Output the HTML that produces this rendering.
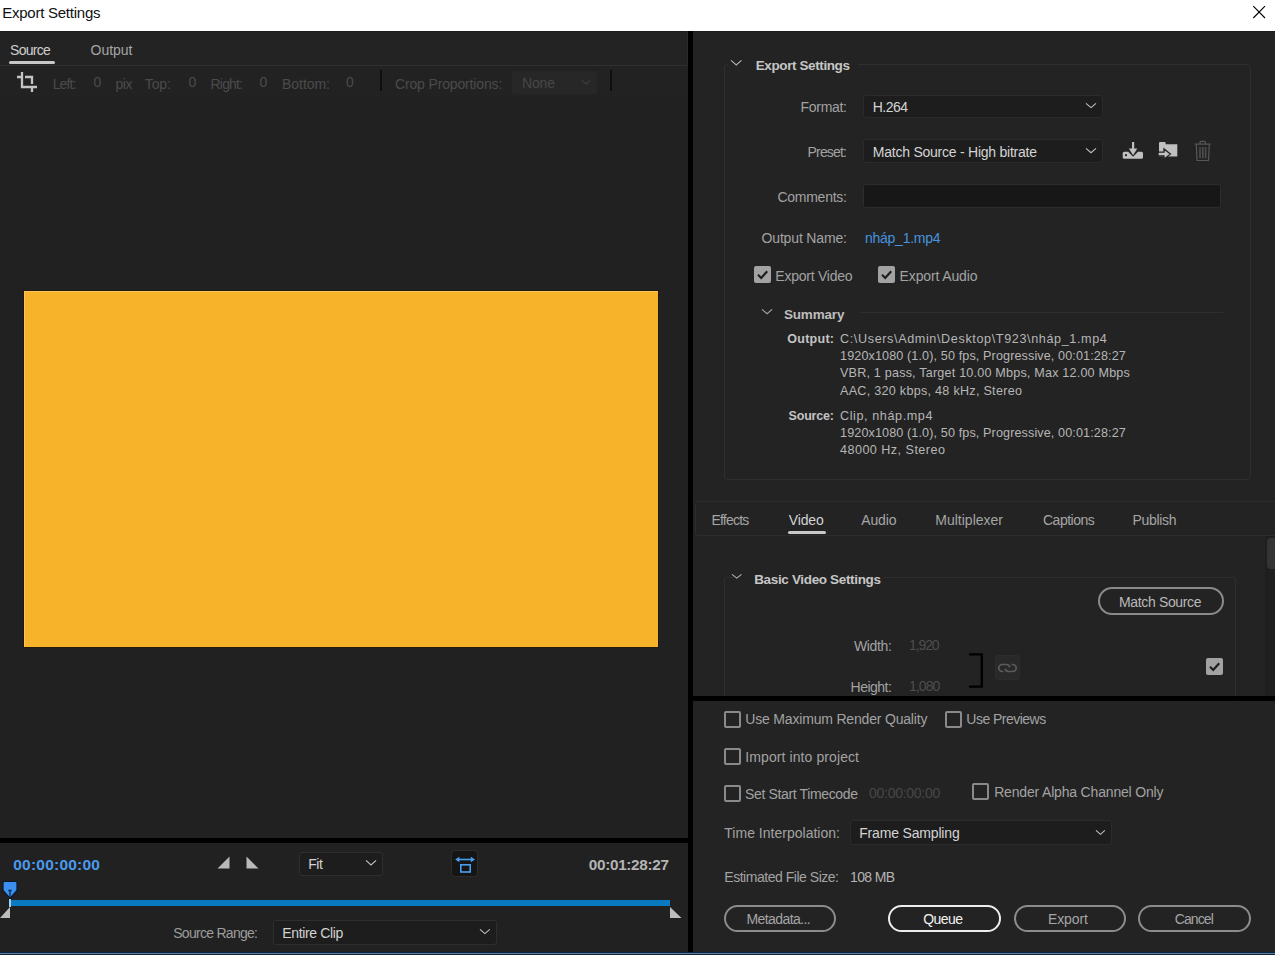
<!DOCTYPE html>
<html><head><meta charset="utf-8"><title>Export Settings</title>
<style>
html,body{margin:0;padding:0;background:#232323;}
body{width:1275px;height:955px;position:relative;overflow:hidden;background:#232323;font-family:"Liberation Sans",sans-serif;}
body>div,body>span,body>svg{position:absolute;}
.t{white-space:nowrap;}
</style></head><body>
<div style="left:0px;top:0px;width:1275px;height:31px;background:#ffffff;"></div>
<div style="left:0px;top:31px;width:1275px;height:1px;background:#1c1c1c;"></div>
<span class="t" style="left:2.20px;top:5.40px;font-size:15px;line-height:15px;color:#111111;letter-spacing:-0.244px;">Export Settings</span>
<svg style="position:absolute;left:1250px;top:3px" width="18" height="18"><path d="M3.3 3.2 L15 15 M15 3.2 L3.3 15" stroke="#000" stroke-width="1.1" fill="none"/></svg>
<div style="left:0px;top:66px;width:688px;height:886px;background:#212121;"></div>
<div style="left:0px;top:66px;width:687px;height:32px;background:#222222;"></div>
<span class="t" style="left:10.00px;top:43.15px;font-size:14.0px;line-height:14.0px;color:#d0d0d0;letter-spacing:-0.712px;">Source</span>
<span class="t" style="left:90.60px;top:43.15px;font-size:14.0px;line-height:14.0px;color:#a5a5a5;letter-spacing:-0.045px;">Output</span>
<div style="left:9px;top:61px;width:46px;height:3px;background:#c8c8c8;border-radius:2px;"></div>
<div style="left:0px;top:65px;width:687px;height:1px;background:#303030;"></div>
<div style="left:687px;top:31px;width:1px;height:35px;background:#2a2a2a;"></div>
<svg style="position:absolute;left:16px;top:71px" width="23" height="23"><path d="M1 6 H7 M6 1 V16 H21 M9 6 H16 V13 M16 15 V21" stroke="#c4c4c4" stroke-width="2.3" fill="none"/></svg>
<span class="t" style="left:52.70px;top:77.15px;font-size:14.0px;line-height:14.0px;color:#4b4b4b;letter-spacing:-0.860px;">Left:</span>
<span class="t" style="left:93.50px;top:75.15px;font-size:14px;line-height:14px;color:#4b4b4b;letter-spacing:0.000px;">0</span>
<span class="t" style="left:115.40px;top:77.15px;font-size:14px;line-height:14px;color:#4b4b4b;letter-spacing:-0.398px;">pix</span>
<span class="t" style="left:144.70px;top:77.15px;font-size:14.0px;line-height:14.0px;color:#4b4b4b;letter-spacing:-0.054px;">Top:</span>
<span class="t" style="left:188.60px;top:75.15px;font-size:14px;line-height:14px;color:#4b4b4b;letter-spacing:0.000px;">0</span>
<span class="t" style="left:210.60px;top:77.15px;font-size:14.0px;line-height:14.0px;color:#4b4b4b;letter-spacing:-0.834px;">Right:</span>
<span class="t" style="left:259.50px;top:75.15px;font-size:14px;line-height:14px;color:#4b4b4b;letter-spacing:0.000px;">0</span>
<span class="t" style="left:282.00px;top:77.15px;font-size:14.0px;line-height:14.0px;color:#4b4b4b;letter-spacing:-0.040px;">Bottom:</span>
<span class="t" style="left:346.00px;top:75.15px;font-size:14px;line-height:14px;color:#4b4b4b;letter-spacing:0.000px;">0</span>
<div style="left:380px;top:70px;width:2px;height:21px;background:#0e0e0e;"></div>
<span class="t" style="left:395.00px;top:77.15px;font-size:14.0px;line-height:14.0px;color:#4b4b4b;letter-spacing:-0.151px;">Crop Proportions:</span>
<div style="left:512px;top:71px;width:85px;height:23px;background:#272727;border-radius:3px;"></div>
<span class="t" style="left:522.00px;top:76.15px;font-size:14px;line-height:14px;color:#474747;letter-spacing:-0.156px;">None</span>
<svg style="position:absolute;left:579px;top:77px" width="14" height="10.5"><path d="M3 3.4 L7.0 7.1 L11 3.4" stroke="#424242" stroke-width="1.05" fill="none"/></svg>
<div style="left:610px;top:70px;width:2px;height:21px;background:#0e0e0e;"></div>
<div style="left:23px;top:290px;width:636px;height:358px;background:#221a0a;"></div>
<div style="left:24px;top:291px;width:634px;height:356px;background:#f7b42a;box-shadow:inset 1px 1px 0 #f8c75c;"></div>
<div style="left:0px;top:838px;width:688px;height:5px;background:#000;"></div>
<span class="t" style="left:13.20px;top:856.58px;font-size:15.5px;line-height:15.5px;color:#4a9aee;font-weight:bold;letter-spacing:0.235px;">00:00:00:00</span>
<svg style="position:absolute;left:216px;top:856px" width="45" height="14"><path d="M1.5 12.5 L13.5 12.5 L13.5 0.5 Z M30.5 0.5 L30.5 12.5 L42.5 12.5 Z" fill="#b9b9b9"/></svg>
<div style="left:299px;top:852px;width:84px;height:24px;background:#1d1d1d;border:1px solid #2e2e2e;border-radius:3px;box-sizing:border-box;"></div>
<span class="t" style="left:308.20px;top:856.75px;font-size:14px;line-height:14px;color:#d2d2d2;letter-spacing:-0.476px;">Fit</span>
<svg style="position:absolute;left:363.4px;top:857.3px" width="16.100000000000023" height="11.400000000000091"><path d="M3 3.4 L8.050000000000011 8.00000000000009 L13.100000000000023 3.4" stroke="#c4c4c4" stroke-width="1.05" fill="none"/></svg>
<div style="left:451px;top:850px;width:27px;height:27px;background:#151515;border:1px solid #2c2c2c;border-radius:4px;box-sizing:border-box;"></div>
<svg style="position:absolute;left:451px;top:850px" width="27" height="27"><path d="M6.5 9.5 H21.5" stroke="#4a9ef0" stroke-width="1.6"/><path d="M4.2 9.5 L8.4 6.8 L8.4 12.2 Z M24 9.5 L19.8 6.8 L19.8 12.2 Z" fill="#4a9ef0"/><rect x="9.8" y="14.8" width="9.4" height="7.2" stroke="#4a9ef0" stroke-width="1.6" fill="none"/></svg>
<span class="t" style="left:588.80px;top:857.05px;font-size:15.3px;line-height:15.3px;color:#b4b4b4;font-weight:bold;letter-spacing:-0.316px;">00:01:28:27</span>
<div style="left:10px;top:900px;width:660px;height:6px;background:#0a7ac0;"></div>
<div style="left:9px;top:899px;width:2px;height:8px;background:#a9cdf0;"></div>
<svg style="position:absolute;left:0px;top:880px" width="20" height="22"><path d="M3 2.5 Q3 1.5 4 1.5 L16 1.5 Q17 1.5 17 2.5 L17 10.5 L10 18.3 L3 10.5 Z" fill="#3a8fef" stroke="#0a1628" stroke-width="1.2"/><path d="M8.3 10.5 H11.7 M10 10.5 V17.5" stroke="#0b2a55" stroke-width="1.3"/></svg>
<svg style="position:absolute;left:0px;top:906px" width="12" height="13"><path d="M0 12 L10 12 L10 1 Z" fill="#bdbdbd"/></svg>
<svg style="position:absolute;left:669px;top:906px" width="14" height="13"><path d="M1 1 L1 12 L12.5 12 Z" fill="#bdbdbd"/></svg>
<span class="t" style="left:173.20px;top:925.65px;font-size:14.0px;line-height:14.0px;color:#9c9c9c;letter-spacing:-0.716px;">Source Range:</span>
<div style="left:273px;top:920px;width:224px;height:25px;background:#1d1d1d;border:1px solid #2e2e2e;border-radius:3px;box-sizing:border-box;"></div>
<span class="t" style="left:282.20px;top:925.65px;font-size:14.0px;line-height:14.0px;color:#d2d2d2;letter-spacing:-0.338px;">Entire Clip</span>
<svg style="position:absolute;left:476.8px;top:926.2px" width="15.800000000000011" height="11.0"><path d="M3 3.4 L7.900000000000006 7.6 L12.800000000000011 3.4" stroke="#c4c4c4" stroke-width="1.05" fill="none"/></svg>
<div style="left:688px;top:31px;width:5px;height:922px;background:#000;"></div>
<div style="left:0px;top:952px;width:1275px;height:1px;background:#0d2540;"></div>
<div style="left:0px;top:953px;width:1275px;height:1px;background:#5a80a8;"></div>
<div style="left:0px;top:954px;width:1275px;height:1px;background:#18222c;"></div>
<div style="left:724px;top:64px;width:527px;height:416px;border:1px solid #2e2e2e;border-radius:3px;box-sizing:border-box;"></div>
<div style="left:728px;top:55px;width:130px;height:14px;background:#232323;"></div>
<svg style="position:absolute;left:728px;top:56.6px" width="16.5" height="11.399999999999999"><path d="M3 3.4 L8.25 7.999999999999998 L13.5 3.4" stroke="#b4b4b4" stroke-width="1.05" fill="none"/></svg>
<span class="t" style="left:755.70px;top:58.57px;font-size:13.5px;line-height:13.5px;color:#c6c6c6;font-weight:bold;letter-spacing:-0.390px;">Export Settings</span>
<span class="t" style="left:800.50px;top:100.45px;font-size:14.0px;line-height:14.0px;color:#a2a2a2;letter-spacing:-0.288px;">Format:</span>
<div style="left:863px;top:95px;width:240px;height:23px;background:#1d1d1d;border:1px solid #2b2b2b;border-radius:3px;box-sizing:border-box;"></div>
<span class="t" style="left:872.80px;top:100.15px;font-size:14px;line-height:14px;color:#d4d4d4;letter-spacing:-0.539px;">H.264</span>
<svg style="position:absolute;left:1083.4px;top:100px" width="16.0" height="11"><path d="M3 3.4 L8.0 7.6 L13.0 3.4" stroke="#c4c4c4" stroke-width="1.05" fill="none"/></svg>
<span class="t" style="left:807.50px;top:145.45px;font-size:14.0px;line-height:14.0px;color:#a2a2a2;letter-spacing:-0.809px;">Preset:</span>
<div style="left:863px;top:139px;width:240px;height:24px;background:#1d1d1d;border:1px solid #2b2b2b;border-radius:3px;box-sizing:border-box;"></div>
<span class="t" style="left:872.80px;top:145.15px;font-size:14.0px;line-height:14.0px;color:#d4d4d4;letter-spacing:-0.239px;">Match Source - High bitrate</span>
<svg style="position:absolute;left:1083.4px;top:144.7px" width="16.0" height="11.100000000000023"><path d="M3 3.4 L8.0 7.700000000000022 L13.0 3.4" stroke="#c4c4c4" stroke-width="1.05" fill="none"/></svg>
<svg style="position:absolute;left:1120px;top:140px" width="26" height="22"><path d="M2.7 13.3 Q2.7 11.8 4.2 11.8 H8.2 L13.1 16.8 L18 11.8 H21.5 Q23 11.8 23 13.3 V17.2 Q23 18.7 21.5 18.7 H4.2 Q2.7 18.7 2.7 17.2 Z" fill="#c0c0c0"/><circle cx="6" cy="15.2" r="1.1" fill="#232323"/><path d="M13.1 2 V9.5" stroke="#c0c0c0" stroke-width="2.2"/><path d="M8.9 8.4 H17.3 L13.1 15.3 Z" fill="#c0c0c0"/></svg>
<svg style="position:absolute;left:1156px;top:140px" width="24" height="22"><path d="M3 3 Q3 2 4 2 H8.6 Q9.6 2 9.6 3 V4.2 H21.3 V16.4 H3 Z" fill="#c0c0c0"/><path d="M2 12.2 H8 V8.9 L14.4 13.9 L8 19.2 V16 H2 Z" fill="#c0c0c0" stroke="#232323" stroke-width="1.3" stroke-linejoin="miter"/></svg>
<svg style="position:absolute;left:1193px;top:140px" width="20" height="22"><path d="M1.8 4.2 H17.8 M7 4 V2.6 Q7 1.4 8.2 1.4 H11.2 Q12.4 1.4 12.4 2.6 V4" stroke="#575757" stroke-width="1.2" fill="none"/><path d="M3.3 4.5 L4 20.5 H15.5 L16.3 4.5" stroke="#575757" stroke-width="1.2" fill="none"/><path d="M7 7 V18.3 M9.8 7 V18.3 M12.6 7 V18.3" stroke="#4e4e4e" stroke-width="1.6"/></svg>
<span class="t" style="left:777.40px;top:190.15px;font-size:14.0px;line-height:14.0px;color:#a2a2a2;letter-spacing:-0.247px;">Comments:</span>
<div style="left:863px;top:184px;width:358px;height:24px;background:#171717;border:1px solid #2d2d2d;border-radius:3px;box-sizing:border-box;"></div>
<span class="t" style="left:761.50px;top:231.45px;font-size:14.0px;line-height:14.0px;color:#a2a2a2;letter-spacing:-0.150px;">Output Name:</span>
<span class="t" style="left:865.00px;top:231.45px;font-size:14.0px;line-height:14.0px;color:#4893de;letter-spacing:-0.260px;">nháp_1.mp4</span>
<svg style="position:absolute;left:754px;top:265.8px" width="18" height="18"><rect x="0" y="0" width="17" height="17" rx="2" fill="#a2a2a2"/><path d="M4 8.8 L7.2 12 L13.2 5.2" stroke="#1e1e1e" stroke-width="2.2" fill="none"/></svg>
<span class="t" style="left:775.30px;top:268.65px;font-size:14.0px;line-height:14.0px;color:#a2a2a2;letter-spacing:-0.237px;">Export Video</span>
<svg style="position:absolute;left:877.5px;top:265.8px" width="18" height="18"><rect x="0" y="0" width="17" height="17" rx="2" fill="#a2a2a2"/><path d="M4 8.8 L7.2 12 L13.2 5.2" stroke="#1e1e1e" stroke-width="2.2" fill="none"/></svg>
<span class="t" style="left:899.60px;top:268.65px;font-size:14.0px;line-height:14.0px;color:#a2a2a2;letter-spacing:-0.135px;">Export Audio</span>
<svg style="position:absolute;left:758.5px;top:306.3px" width="16.100000000000023" height="11.099999999999966"><path d="M3 3.4 L8.050000000000011 7.6999999999999655 L13.100000000000023 3.4" stroke="#a8a8a8" stroke-width="1.05" fill="none"/></svg>
<span class="t" style="left:784.00px;top:307.97px;font-size:13.5px;line-height:13.5px;color:#bdbdbd;font-weight:bold;letter-spacing:-0.188px;">Summary</span>
<div style="left:860px;top:312px;width:363px;height:1px;background:#2e2e2e;"></div>
<span class="t" style="left:787.30px;top:332.92px;font-size:12.5px;line-height:12.5px;color:#c4c4c4;font-weight:bold;letter-spacing:0.264px;">Output:</span>
<span class="t" style="left:840.00px;top:332.83px;font-size:12.6px;line-height:12.6px;color:#b6b6b6;letter-spacing:0.629px;">C:\Users\Admin\Desktop\T923\nháp_1.mp4</span>
<span class="t" style="left:840.00px;top:350.13px;font-size:12.6px;line-height:12.6px;color:#b6b6b6;letter-spacing:0.121px;">1920x1080 (1.0), 50 fps, Progressive, 00:01:28:27</span>
<span class="t" style="left:840.00px;top:367.33px;font-size:12.6px;line-height:12.6px;color:#b6b6b6;letter-spacing:0.193px;">VBR, 1 pass, Target 10.00 Mbps, Max 12.00 Mbps</span>
<span class="t" style="left:840.00px;top:384.63px;font-size:12.6px;line-height:12.6px;color:#b6b6b6;letter-spacing:0.272px;">AAC, 320 kbps, 48 kHz, Stereo</span>
<span class="t" style="left:788.50px;top:410.12px;font-size:12.5px;line-height:12.5px;color:#c4c4c4;font-weight:bold;letter-spacing:-0.173px;">Source:</span>
<span class="t" style="left:840.00px;top:410.03px;font-size:12.6px;line-height:12.6px;color:#b6b6b6;letter-spacing:0.596px;">Clip, nháp.mp4</span>
<span class="t" style="left:840.00px;top:427.13px;font-size:12.6px;line-height:12.6px;color:#b6b6b6;letter-spacing:0.121px;">1920x1080 (1.0), 50 fps, Progressive, 00:01:28:27</span>
<span class="t" style="left:840.00px;top:444.33px;font-size:12.6px;line-height:12.6px;color:#b6b6b6;letter-spacing:0.462px;">48000 Hz, Stereo</span>
<div style="left:695px;top:501px;width:590px;height:35px;border:1px solid #2c2c2c;border-radius:3px;box-sizing:border-box;"></div>
<span class="t" style="left:711.40px;top:513.15px;font-size:14px;line-height:14px;color:#a5a5a5;letter-spacing:-0.773px;">Effects</span>
<span class="t" style="left:788.80px;top:513.15px;font-size:14px;line-height:14px;color:#d2d2d2;letter-spacing:-0.138px;">Video</span>
<span class="t" style="left:861.30px;top:513.15px;font-size:14px;line-height:14px;color:#a5a5a5;letter-spacing:-0.152px;">Audio</span>
<span class="t" style="left:935.30px;top:513.15px;font-size:14px;line-height:14px;color:#a5a5a5;letter-spacing:0.001px;">Multiplexer</span>
<span class="t" style="left:1043.00px;top:513.15px;font-size:14px;line-height:14px;color:#a5a5a5;letter-spacing:-0.508px;">Captions</span>
<span class="t" style="left:1132.40px;top:513.15px;font-size:14px;line-height:14px;color:#a5a5a5;letter-spacing:-0.303px;">Publish</span>
<div style="left:788px;top:531px;width:38px;height:3px;background:#c8c8c8;border-radius:2px;"></div>
<div style="left:1265px;top:536px;width:10px;height:160px;background:#1f1f1f;"></div>
<div style="left:1267px;top:537.5px;width:12px;height:31px;background:#343434;border-radius:4px;"></div>
<div style="left:724px;top:577px;width:512px;height:125px;border:1px solid #2e2e2e;border-bottom:none;border-radius:3px 3px 0 0;box-sizing:border-box;"></div>
<div style="left:734px;top:568px;width:150px;height:14px;background:#232323;"></div>
<svg style="position:absolute;left:728.5px;top:571px" width="15.5" height="10.5"><path d="M3 3.4 L7.75 7.1 L12.5 3.4" stroke="#b4b4b4" stroke-width="1.05" fill="none"/></svg>
<span class="t" style="left:754.20px;top:572.87px;font-size:13.5px;line-height:13.5px;color:#c6c6c6;font-weight:bold;letter-spacing:-0.342px;">Basic Video Settings</span>
<div style="left:1098px;top:587px;width:126px;height:28px;border:2px solid #8a8a8a;border-radius:14px;box-sizing:border-box;"></div>
<span class="t" style="left:1119.00px;top:595.15px;font-size:14.0px;line-height:14.0px;color:#b9b9b9;letter-spacing:-0.352px;">Match Source</span>
<span class="t" style="left:854.00px;top:639.45px;font-size:14px;line-height:14px;color:#a2a2a2;letter-spacing:-0.375px;">Width:</span>
<span class="t" style="left:909.00px;top:637.85px;font-size:14px;line-height:14px;color:#4d4d4d;letter-spacing:-1.108px;">1,920</span>
<span class="t" style="left:850.60px;top:680.45px;font-size:14px;line-height:14px;color:#a2a2a2;letter-spacing:-0.526px;">Height:</span>
<span class="t" style="left:909.00px;top:678.95px;font-size:14px;line-height:14px;color:#4d4d4d;letter-spacing:-0.908px;">1,080</span>
<svg style="position:absolute;left:968px;top:652px" width="16" height="37"><path d="M1 2.4 H13.8 V34.6 H1" stroke="#000" stroke-width="2.4" fill="none"/></svg>
<div style="left:995px;top:655px;width:25px;height:25px;background:#292929;border:1px solid #2d2d2d;box-sizing:border-box;border-radius:3px;"></div>
<svg style="position:absolute;left:995px;top:655px" width="25" height="25"><path d="M8.5 16.5 H7.3 A3.5 3.5 0 0 1 7.3 9.5 H11.7 A3.5 3.5 0 0 1 14.8 12.2 M16.5 9.5 H17.7 A3.5 3.5 0 0 1 17.7 16.5 H13.3 A3.5 3.5 0 0 1 10.2 13.8" stroke="#5c5c5c" stroke-width="1.7" fill="none"/></svg>
<svg style="position:absolute;left:1206px;top:658px" width="18" height="18"><rect x="0" y="0" width="17" height="17" rx="2" fill="#a2a2a2"/><path d="M4 8.8 L7.2 12 L13.2 5.2" stroke="#1e1e1e" stroke-width="2.2" fill="none"/></svg>
<div style="left:693px;top:696px;width:582px;height:5px;background:#000;"></div>
<div style="left:724px;top:710.5px;width:17px;height:17px;border:2px solid #8a8a8a;border-radius:2px;box-sizing:border-box;"></div>
<span class="t" style="left:745.30px;top:712.15px;font-size:14.0px;line-height:14.0px;color:#a2a2a2;letter-spacing:-0.185px;">Use Maximum Render Quality</span>
<div style="left:944.7px;top:710.5px;width:17px;height:17px;border:2px solid #8a8a8a;border-radius:2px;box-sizing:border-box;"></div>
<span class="t" style="left:966.30px;top:712.15px;font-size:14.0px;line-height:14.0px;color:#a2a2a2;letter-spacing:-0.516px;">Use Previews</span>
<div style="left:724px;top:748px;width:17px;height:17px;border:2px solid #8a8a8a;border-radius:2px;box-sizing:border-box;"></div>
<span class="t" style="left:745.30px;top:749.75px;font-size:14.0px;line-height:14.0px;color:#a2a2a2;letter-spacing:0.092px;">Import into project</span>
<div style="left:724px;top:785px;width:17px;height:17px;border:2px solid #8a8a8a;border-radius:2px;box-sizing:border-box;"></div>
<span class="t" style="left:745.00px;top:787.15px;font-size:14.0px;line-height:14.0px;color:#a2a2a2;letter-spacing:-0.356px;">Set Start Timecode</span>
<span class="t" style="left:869.00px;top:785.65px;font-size:14px;line-height:14px;color:#474747;letter-spacing:-0.276px;">00:00:00:00</span>
<div style="left:972px;top:783px;width:17px;height:17px;border:2px solid #8a8a8a;border-radius:2px;box-sizing:border-box;"></div>
<span class="t" style="left:994.20px;top:785.05px;font-size:14.0px;line-height:14.0px;color:#a2a2a2;letter-spacing:-0.177px;">Render Alpha Channel Only</span>
<span class="t" style="left:724.30px;top:825.85px;font-size:14.0px;line-height:14.0px;color:#a2a2a2;letter-spacing:0.015px;">Time Interpolation:</span>
<div style="left:850px;top:820px;width:262px;height:25px;background:#1d1d1d;border:1px solid #2b2b2b;border-radius:3px;box-sizing:border-box;"></div>
<span class="t" style="left:859.20px;top:826.15px;font-size:14.0px;line-height:14.0px;color:#d4d4d4;letter-spacing:-0.169px;">Frame Sampling</span>
<svg style="position:absolute;left:1093px;top:826.6px" width="14.900000000000091" height="10.699999999999932"><path d="M3 3.4 L7.4500000000000455 7.299999999999931 L11.900000000000091 3.4" stroke="#c4c4c4" stroke-width="1.05" fill="none"/></svg>
<span class="t" style="left:724.30px;top:869.65px;font-size:14.0px;line-height:14.0px;color:#a2a2a2;letter-spacing:-0.474px;">Estimated File Size:</span>
<span class="t" style="left:850.00px;top:869.65px;font-size:14px;line-height:14px;color:#b4b4b4;letter-spacing:-0.650px;">108 MB</span>
<div style="left:723.5px;top:905px;width:112.20000000000005px;height:27px;border:2px solid #8c8c8c;border-radius:14px;box-sizing:border-box;"></div>
<span class="t" style="left:746.50px;top:912.15px;font-size:14.0px;line-height:14.0px;color:#a5a5a5;letter-spacing:-0.594px;">Metadata...</span>
<div style="left:888px;top:905px;width:113px;height:27px;border:2px solid #ededed;border-radius:14px;box-sizing:border-box;"></div>
<span class="t" style="left:923.30px;top:912.15px;font-size:14.0px;line-height:14.0px;color:#f2f2f2;letter-spacing:-0.583px;">Queue</span>
<div style="left:1013.5px;top:905px;width:112.29999999999995px;height:27px;border:2px solid #8c8c8c;border-radius:14px;box-sizing:border-box;"></div>
<span class="t" style="left:1048.00px;top:912.15px;font-size:14.0px;line-height:14.0px;color:#a5a5a5;letter-spacing:-0.133px;">Export</span>
<div style="left:1138px;top:905px;width:113px;height:27px;border:2px solid #8c8c8c;border-radius:14px;box-sizing:border-box;"></div>
<span class="t" style="left:1174.70px;top:912.15px;font-size:14.0px;line-height:14.0px;color:#a5a5a5;letter-spacing:-0.896px;">Cancel</span>
</body></html>
